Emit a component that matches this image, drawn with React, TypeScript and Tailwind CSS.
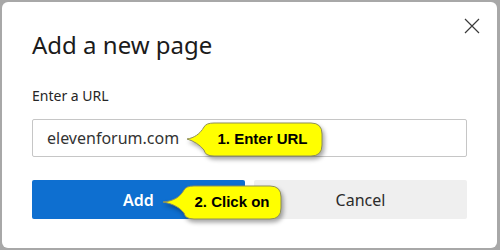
import React from 'react'

type CalloutProps = {
  left: number
  top: number
  bodyW: number
  tail: number
  text: string
}

// yellow speech-bubble annotation drawn over the dialog
const Callout: React.FC<CalloutProps> = ({ left, top, bodyW, tail, text }) => {
  const h = 33
  const x0 = tail
  const x1 = tail + bodyW
  const r = 11
  const d = [
    `M0 16`,
    `C ${x0 - 9} 15, ${x0 - 3} 11, ${x0 + 1} 4`,
    `Q ${x0 + 3} 0, ${x0 + 11} 0`,
    `H ${x1 - r} Q ${x1} 0, ${x1} ${r}`,
    `V ${h - r} Q ${x1} ${h}, ${x1 - r} ${h}`,
    `H ${x0 + 11} Q ${x0 + 2} ${h}, ${x0 + 1} ${h - 6}`,
    `C ${x0 - 3} ${h - 11}, ${x0 - 9} 18, 0 16 Z`,
  ].join(' ')
  return (
    <div className="absolute" style={{ left, top, width: x1, height: h }}>
      <svg
        width={x1}
        height={h}
        viewBox={`0 0 ${x1} ${h}`}
        className="absolute inset-0 overflow-visible drop-shadow-[2px_3px_2px_rgba(0,0,0,0.35)]"
      >
        <path d={d} fill="#ffff00" stroke="#8f8f5a" strokeWidth="1" />
      </svg>
      <div
        className="absolute top-0 bottom-0 flex items-center justify-center text-[15px] font-bold text-black font-['Liberation_Sans',Arial,sans-serif]"
        style={{ left: x0, width: bodyW }}
      >
        {text}
      </div>
    </div>
  )
}

const App: React.FC = () => {
  return (
    <div className="w-[500px] h-[250px] bg-[#a8a8a8] pt-[2px] pl-[2px] pr-[3px] pb-[2px] font-['Noto_Sans',sans-serif]">
      <div className="relative h-full bg-white rounded-[6px] pt-[15px] pl-[30px] pr-[30px]">
        {/* Header */}
        <div className="flex items-start justify-between">
          <h2 className="mt-[12px] text-[24px] leading-[32px] text-[#1b1b1b]">Add a new page</h2>
          <button className="mr-[-13px] w-[17px] h-[17px] flex items-center justify-center text-[#333]">
            <svg width="16" height="16" viewBox="0 0 16 16">
              <path d="M1 1 L15 15 M15 1 L1 15" stroke="#3a3a3a" strokeWidth="1.2" fill="none" />
            </svg>
          </button>
        </div>

        {/* URL field */}
        <label className="block mt-[25px] text-[14px] leading-[20px] text-[#262626]">Enter a URL</label>
        <div className="mt-[13px] h-[38px] border border-[#c6c6c6] rounded-[2px] flex items-center px-[14px]">
          <span className="text-[16px] text-[#333]">elevenforum.com</span>
        </div>

        {/* Actions */}
        <div className="mt-[23px] grid grid-cols-2 gap-[9px]">
          <button className="h-[39px] rounded-[2px] bg-[#0e6fd0] text-white text-[16px] font-semibold">Add</button>
          <button className="h-[39px] rounded-[2px] bg-[#efefef] text-[#2b2b2b] text-[16px]">Cancel</button>
        </div>

        <Callout left={185} top={121} bodyW={119} tail={16} text="1. Enter URL" />
        <Callout left={161} top={184} bodyW={98} tail={20} text="2. Click on" />
      </div>
    </div>
  )
}

export default App
